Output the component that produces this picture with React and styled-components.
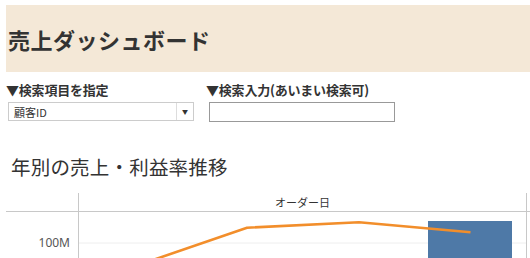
import React from "react";
import styled, { createGlobalStyle } from "styled-components";

const GlobalStyle = createGlobalStyle`
	body {
		margin: 0;
		background: #ffffff;
		font-family: "Noto Sans CJK JP", "Noto Sans", sans-serif;
		color: #333333;
		overflow: hidden;
	}
`;

const years = [
	{ x: -55, y: 66 },
	{ x: 56.5, y: 54 },
	{ x: 168, y: 15.7 },
	{ x: 280, y: 10.3 },
	{ x: 391.5, y: 20.3 },
];

const App = () => {
	const points = years.map((p) => `${p.x},${p.y}`).join(" ");
	return (
		<>
			<GlobalStyle />
			<Page>
				<Header>
					<Title>売上ダッシュボード</Title>
				</Header>
				<Filters>
					<FilterGroup>
						<Label>▼検索項目を指定</Label>
						<Select>
							<SelectValue>顧客ID</SelectValue>
							<SelectArrow>▼</SelectArrow>
						</Select>
					</FilterGroup>
					<FilterGroup>
						<Label>▼検索入力(あいまい検索可)</Label>
						<TextInput type="text" />
					</FilterGroup>
				</Filters>
				<ChartTitle>年別の売上・利益率推移</ChartTitle>
				<Chart>
					<HeadCell />
					<HeadCell $plot>オーダー日</HeadCell>
					<HeadCell />
					<AxisCell>
						<AxisLabel>100M</AxisLabel>
					</AxisCell>
					<PlotCell>
						<svg width="447" height="60" viewBox="0 0 447 60">
							<line x1="0" y1="31" x2="447" y2="31" stroke="#eeeeee" strokeWidth="1" />
							<rect x="349" y="9" width="84" height="60" fill="#4e79a7" />
							<polyline
								points={points}
								fill="none"
								stroke="#f28e2b"
								strokeWidth="2.6"
								strokeLinejoin="round"
							/>
						</svg>
					</PlotCell>
					<RestCell />
				</Chart>
			</Page>
		</>
	);
};

export default App;

const Page = styled.div`
	padding: 5px 0 0 6px;
	width: 524px;
	height: 253px;
	overflow: hidden;
`;

const Header = styled.div`
	height: 67px;
	background-color: #f4e8d7;
	display: flex;
	align-items: center;
	padding-left: 2px;
`;

const Title = styled.h1`
	margin: 0;
	font-size: 22px;
	font-weight: 700;
	color: #333333;
	letter-spacing: 0.5px;
`;

const Filters = styled.div`
	display: flex;
	margin-top: 10px;
`;

const FilterGroup = styled.div`
	width: 200px;
	display: flex;
	flex-direction: column;
	gap: 4px;
`;

const Label = styled.div`
	font-size: 13px;
	font-weight: 700;
	line-height: 16px;
	color: #333333;
	letter-spacing: -0.2px;
`;

const Select = styled.div`
	margin-left: 2px;
	width: 186px;
	height: 19px;
	box-sizing: border-box;
	border: 1px solid #cccccc;
	display: flex;
	align-items: center;
`;

const SelectValue = styled.span`
	flex: 1;
	padding-left: 5px;
	font-size: 11px;
	color: #333333;
`;

const SelectArrow = styled.span`
	width: 16px;
	height: 100%;
	border-left: 1px solid #dddddd;
	display: flex;
	align-items: center;
	justify-content: center;
	font-size: 6px;
	color: #333333;
`;

const TextInput = styled.input`
	margin: 0 0 0 3px;
	width: 186px;
	height: 20px;
	box-sizing: border-box;
	border: 1px solid #999999;
	padding: 0 4px;
	outline: 0;
`;

const ChartTitle = styled.div`
	margin-top: 33px;
	padding-left: 5px;
	font-size: 19.5px;
	line-height: 24px;
	font-weight: 400;
	color: #333333;
	letter-spacing: 0.2px;
`;

const Chart = styled.div`
	margin-top: 14px;
	display: grid;
	grid-template-columns: 72px 449px 1fr;
	grid-template-rows: 19px 60px;
`;

const HeadCell = styled.div`
	border-bottom: 1px solid #c8c8c8;
	${(p) =>
		p.$plot &&
		`
		border-left: 1px solid #c8c8c8;
		border-right: 1px solid #c8c8c8;
		`}
	display: flex;
	align-items: center;
	justify-content: center;
	font-size: 11px;
	color: #333333;
`;

const AxisCell = styled.div`
	position: relative;
`;

const AxisLabel = styled.span`
	position: absolute;
	right: 8px;
	top: 23px;
	font-size: 12px;
	line-height: 16px;
	color: #555555;
	font-family: "Noto Sans", sans-serif;
`;

const PlotCell = styled.div`
	border-left: 1px solid #c8c8c8;
	border-right: 1px solid #c8c8c8;
	overflow: hidden;
	svg {
		display: block;
	}
`;

const RestCell = styled.div``;
